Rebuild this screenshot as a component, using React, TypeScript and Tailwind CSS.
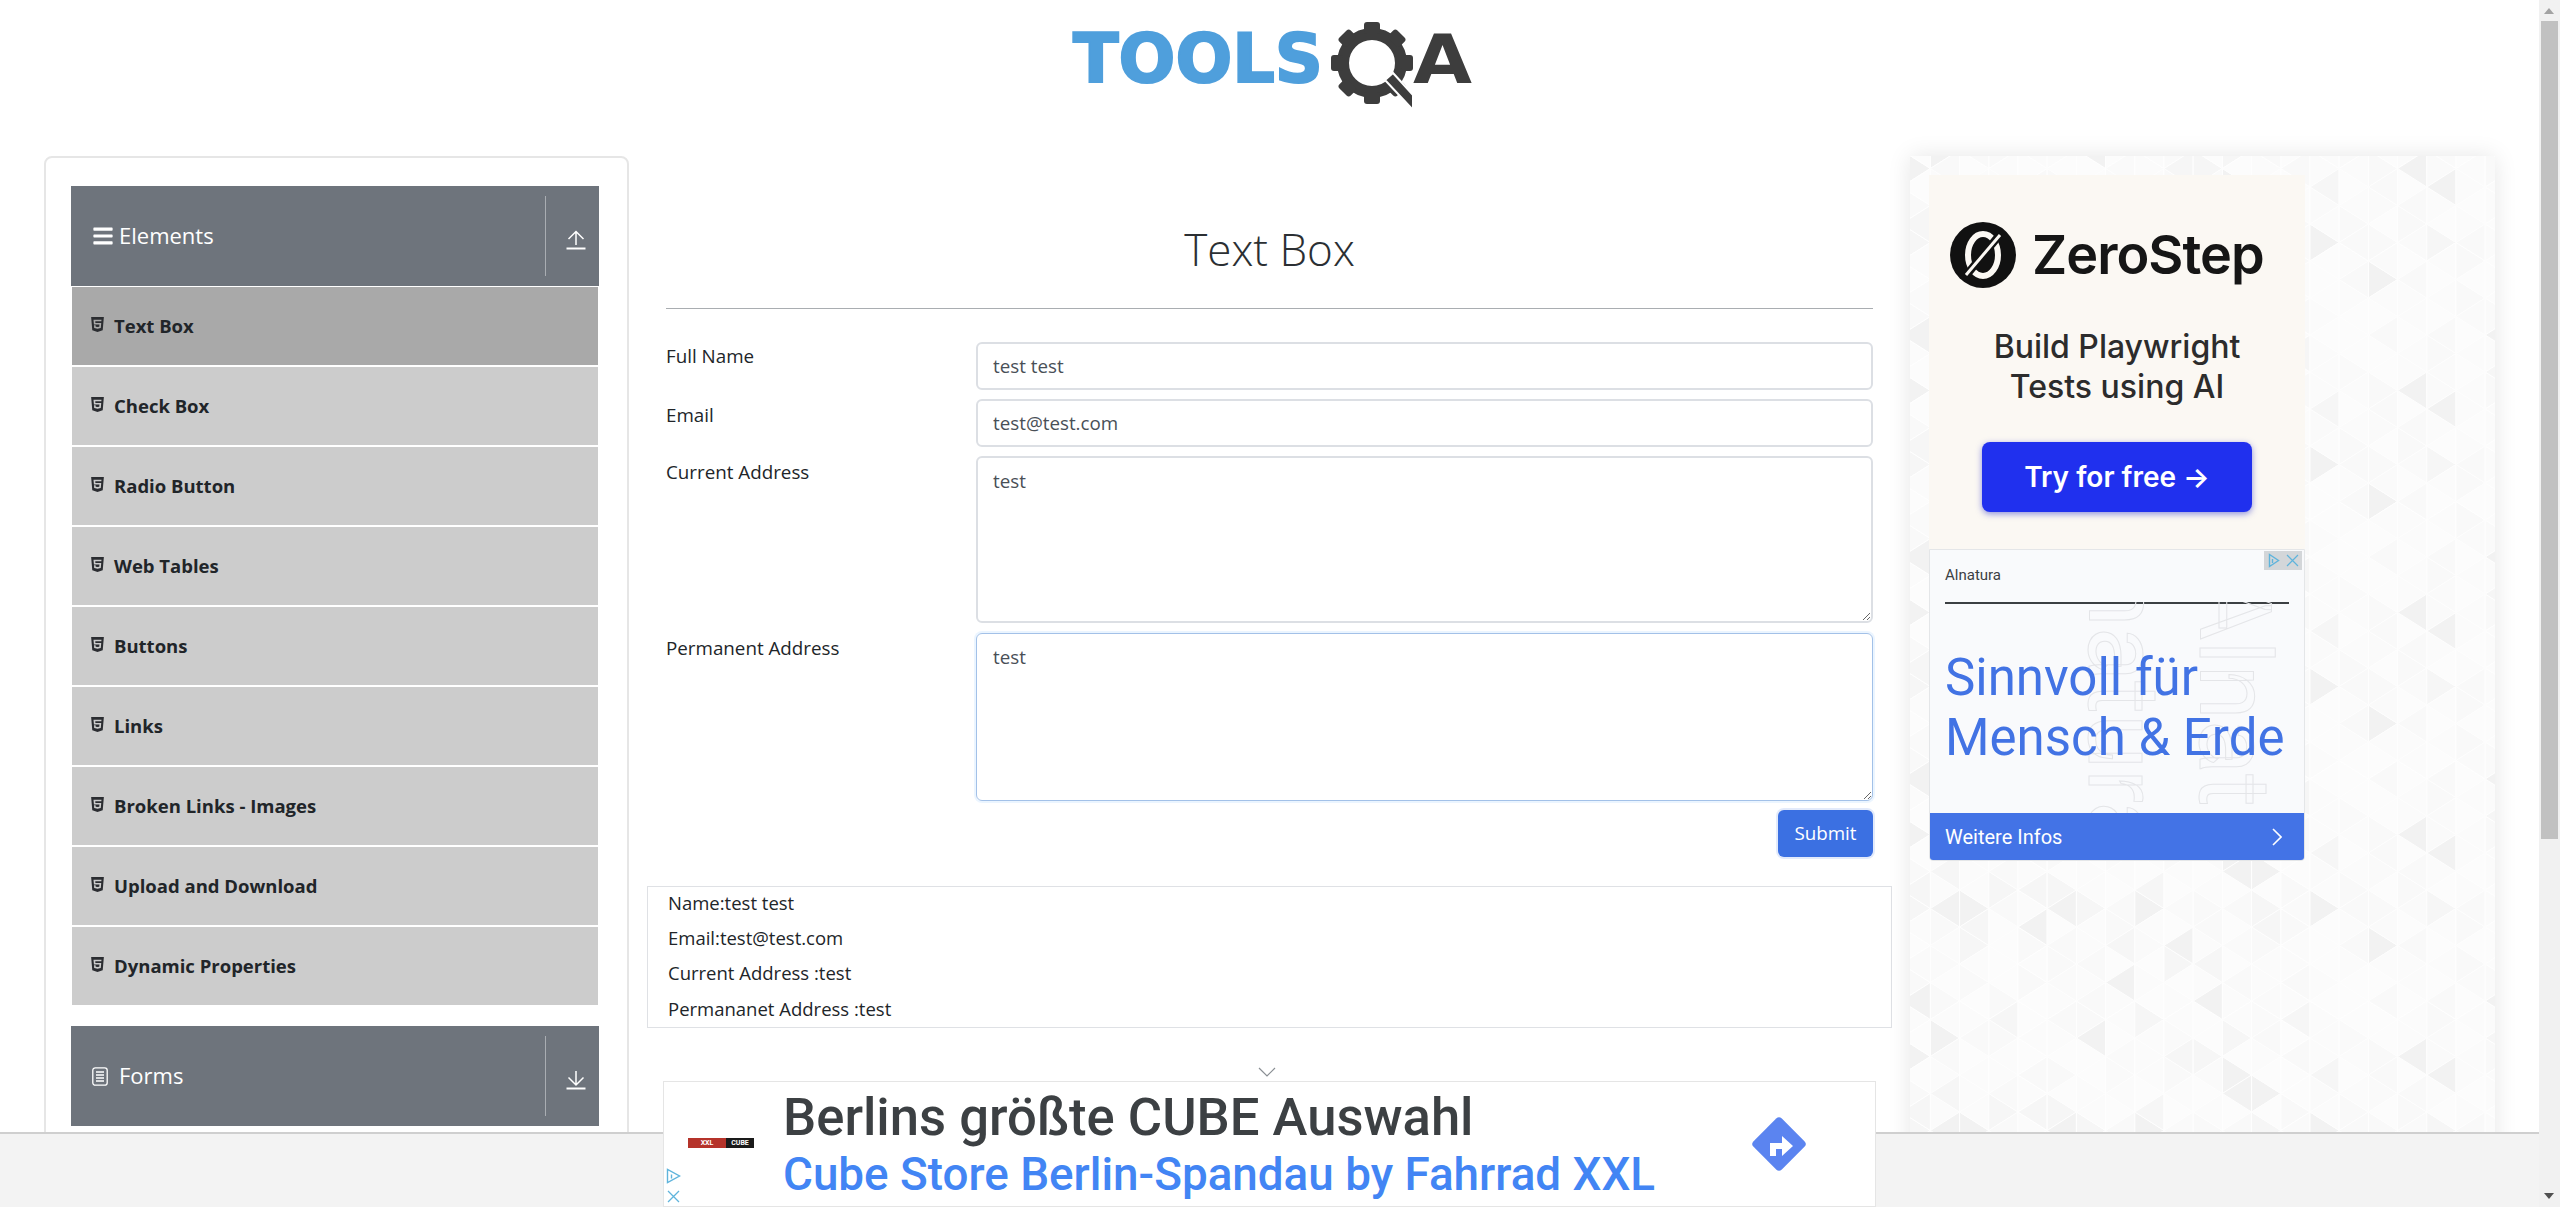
import React from "react";
import { FaBars, FaHtml5 } from "react-icons/fa";

const items = [
  "Text Box",
  "Check Box",
  "Radio Button",
  "Web Tables",
  "Buttons",
  "Links",
  "Broken Links - Images",
  "Upload and Download",
  "Dynamic Properties",
];

const Logo = () => (
  <svg width="400" height="156" viewBox="0 0 400 156">
    <text x="1" y="82" fontFamily="DejaVu Sans" fontWeight="700" fontSize="67" fill="#4f9fdc" stroke="#4f9fdc" strokeWidth="2" textLength="250" lengthAdjust="spacingAndGlyphs">
      TOOLS
    </text>
    <g transform="translate(300 63)" fill="#3d3d3d">
      <circle r="29" fill="none" stroke="#3d3d3d" strokeWidth="12" />
      {[0, 45, 90, 135, 180, 225, 270, 315].map((a) => (
        <rect key={a} x="-8" y="-41" width="16" height="12" rx="3" transform={`rotate(${a})`} />
      ))}
    </g>
    <polygon points="313,80 321,73 341,95 341,110" fill="#3d3d3d" stroke="#fff" strokeWidth="2" />
    <text x="341" y="83" fontFamily="DejaVu Sans" fontWeight="700" fontSize="68" fill="#3d3d3d" textLength="59" lengthAdjust="spacingAndGlyphs">
      A
    </text>
  </svg>
);

const ArrowIcon = ({ down }: { down?: boolean }) => (
  <svg width="20" height="20" viewBox="0 0 20 20" fill="none" stroke="#fff" strokeWidth="1.5">
    <path d="M0.5 18.5h19" strokeWidth="2" />
    {down ? <path d="M10 1v14M2.5 7.5l7.5 7.5 7.5-7.5" /> : <path d="M10 15V1.5M2.5 9l7.5-7.5L17.5 9" />}
  </svg>
);

const DocIcon = () => (
  <svg width="16" height="19" viewBox="0 0 16 19" fill="none" stroke="#fff" strokeWidth="1.3">
    <rect x="0.8" y="0.8" width="14.4" height="17.4" rx="2.5" />
    <path d="M4 5h8M4 8h8M4 11h8M4 14h8" />
  </svg>
);

const GroupHeader = ({ title, icon, down, className }: { title: string; icon: React.ReactNode; down?: boolean; className?: string }) => (
  <div className={`h-[100px] bg-[#6e747c] flex items-center text-white ${className ?? ""}`}>
    <div className="w-[48px] pl-[21px] flex justify-start shrink-0">{icon}</div>
    <div className="flex-1 text-[22px] leading-none -mt-[3px]">{title}</div>
    <div className="w-[54px] h-[80px] border-l border-[#a9adb2] flex items-center justify-center pl-[7px] pt-[8px]">
      <ArrowIcon down={down} />
    </div>
  </div>
);

const PatternBg = () => {
  const w = 29.2;
  const h = 37;
  const polys: React.ReactNode[] = [];
  const fills = ["#f2f2f2", "#fbfbfb", "#f9f9f9", "#fcfcfc", "#f6f6f6", "#fafafa", "#fcfcfc", "#fbfbfb", "#f9f9f9", "#fcfcfc", "#fbfbfb"];
  for (let c = 0; c < 22; c++) {
    const x = -8.8 + c * w;
    const off = c % 2 === 0 ? 0 : h / 2;
    for (let r = -1; r < 30; r++) {
      const rr = ((r % 6) + 6) % 6;
      const y = r * h + off - 6;
      const f1 = fills[(c * 7 + rr * 13 + (c % 5) * rr) % 11];
      const f2 = fills[(c * 5 + rr * 17 + 3 + (c % 3) * rr) % 11];
      polys.push(
        <polygon key={`a${c}-${r}`} points={`${x},${y} ${x},${y + h} ${x + w},${y + h / 2}`} fill={f1} stroke="#fefefe" strokeWidth="1" />,
        <polygon key={`b${c}-${r}`} points={`${x},${y} ${x + w},${y - h / 2} ${x + w},${y + h / 2}`} fill={f2} stroke="#fefefe" strokeWidth="1" />
      );
    }
  }
  return (
    <svg className="absolute inset-0 w-full h-full" aria-hidden="true">
      {polys}
    </svg>
  );
};

const ZeroStepAd = () => (
  <div className="h-[374px] bg-[#fbf8f3] flex flex-col items-center font-['Inter',sans-serif] text-[#222]">
    <div className="flex items-center h-[66px] mt-[47px] w-full pl-[21px]">
      <svg width="66" height="66" viewBox="0 0 66 66" className="shrink-0">
        <circle cx="33" cy="33" r="33" fill="#111" />
        <ellipse cx="33" cy="33" rx="15" ry="21" fill="none" stroke="#fbf8f3" strokeWidth="6" />
        <path d="M14 56L52 10" stroke="#111" strokeWidth="8" />
        <path d="M16 53L50 13" stroke="#fbf8f3" strokeWidth="3" />
      </svg>
      <div className="ml-[16px] text-[54px] leading-none font-semibold tracking-[-1px] text-[#161616]">ZeroStep</div>
    </div>
    <div className="mt-[39px] text-[32px] leading-[40px] font-medium text-center text-[#2c2c2c]">
      Build Playwright
      <br />
      Tests using AI
    </div>
    <div className="mt-[35px] w-[270px] h-[70px] rounded-[8px] bg-[#2030ee] shadow-[0_2px_6px_rgba(30,40,200,0.5)] flex items-center justify-center text-white text-[28px] font-semibold">
      Try for free →
    </div>
  </div>
);

const AdChoices = () => (
  <div className="absolute top-[1px] right-[2px] flex">
    <div className="w-[19px] h-[19px] bg-[#d3d6d9] flex items-center justify-center">
      <svg width="12" height="15" viewBox="0 0 12 15" fill="none" stroke="#5fb4dc" strokeWidth="1.4">
        <path d="M1.5 1.5v12l9-6z" />
        <path d="M4.5 6v4" />
      </svg>
    </div>
    <div className="w-[19px] h-[19px] bg-[#d3d6d9] flex items-center justify-center">
      <svg width="13" height="13" viewBox="0 0 13 13" fill="none" stroke="#5fb4dc" strokeWidth="1.2">
        <path d="M1 1l11 11M12 1L1 12" />
      </svg>
    </div>
  </div>
);

const AlnaturaAd = () => (
  <div className="relative h-[312px] bg-[#f9fafc] border border-[#e4e6e8] rounded-b-[4px] font-['Roboto',sans-serif] overflow-hidden flex flex-col">
    <div className="absolute left-0 top-[52px] h-[211px] w-full overflow-hidden" aria-hidden="true">
      <div className="absolute left-[243px] top-[-120px] rotate-90 origin-top-left whitespace-nowrap text-[100px] leading-none text-transparent [-webkit-text-stroke:1px_#e4e5e8]">
        Alnatura
      </div>
      <div className="absolute left-[354px] top-[-27px] rotate-90 origin-top-left whitespace-nowrap text-[100px] leading-none text-transparent [-webkit-text-stroke:1px_#e4e5e8]">
        Alnatura
      </div>
    </div>
    <AdChoices />
    <div className="pl-[15px] pt-[15px] text-[15px] leading-[20px] text-[#3c4043]">Alnatura</div>
    <div className="mx-[15px] mt-[17px] h-[2px] bg-[#3c4043]" />
    <div className="relative pl-[15px] mt-[44px] text-[51px] leading-[60px] text-[#4273e4] flex-1">
      Sinnvoll für
      <br />
      Mensch &amp; Erde
    </div>
    <div className="relative h-[47px] bg-[#4373e6] flex items-center justify-between pl-[15px] pr-[22px] text-white text-[20px]">
      Weitere Infos
      <svg width="10" height="18" viewBox="0 0 10 18" fill="none" stroke="#fff" strokeWidth="1.6">
        <path d="M1 1l8 8-8 8" />
      </svg>
    </div>
  </div>
);

const App = () => {
  return (
    <div className="flex h-[1207px] overflow-hidden bg-white font-['Open_Sans',sans-serif] text-[#212529]">
      <div className="relative flex-1 min-w-0 overflow-hidden">
        <div className="h-[156px] flex justify-center pl-[5px]">
          <Logo />
        </div>

        <div className="flex pl-[44px]">
          {/* left menu */}
          <div className="w-[585px] h-[1100px] shrink-0 border-2 border-[#e6e6e6] rounded-[8px] pt-[28px] pl-[25px]">
            <div className="w-[528px]">
              <GroupHeader title="Elements" icon={<FaBars size={22} />} />
              {items.map((item, i) => (
                <div
                  key={item}
                  className={`h-[80px] flex items-center pl-[18px] gap-[8px] border border-white font-bold text-[18.5px] ${i === 0 ? "bg-[#a9a9a9] border-[#d5dbe3]" : "bg-[#cccccc]"}`}
                >
                  <FaHtml5 size={17} className="text-[#2b2d31] -mt-[3px] -ml-[1px]" />
                  <span>{item}</span>
                </div>
              ))}
              <GroupHeader title="Forms" icon={<DocIcon />} down className="mt-[20px]" />
            </div>
          </div>

          {/* center column */}
          <div className="w-[1245px] ml-[18px] shrink-0">
            <div className="px-[19px]">
              <h1 className="h-[153px] border-b border-[#a9adb1] text-center text-[44px] font-light leading-none pt-[71px] text-[#2b2f33]">Text Box</h1>
              <div className="mt-[33px] flex flex-col text-[18.8px]">
                <div className="flex h-[48px]">
                  <label className="w-[310px]">Full Name</label>
                  <input defaultValue="test test" className="flex-1 h-[48px] px-[15px] border-2 border-[#dcdfe4] rounded-[6px] text-[#495057] outline-none" />
                </div>
                <div className="flex h-[48px] mt-[9px]">
                  <label className="w-[310px] pt-[2px]">Email</label>
                  <input defaultValue="test@test.com" className="flex-1 h-[48px] px-[15px] border-2 border-[#dcdfe4] rounded-[6px] text-[#495057] outline-none" />
                </div>
                <div className="flex h-[167px] mt-[9px]">
                  <label className="w-[310px] pt-[2px]">Current Address</label>
                  <textarea defaultValue="test" className="flex-1 h-[167px] px-[15px] pt-[9px] border-2 border-[#dcdfe4] rounded-[6px] text-[#495057] outline-none resize" />
                </div>
                <div className="flex h-[168px] mt-[10px]">
                  <label className="w-[310px] pt-[1px]">Permanent Address</label>
                  <textarea defaultValue="test" className="flex-1 h-[168px] px-[16px] pt-[9px] border border-[#a3c1e8] rounded-[6px] text-[#495057] outline-none resize shadow-[0_0_0_2px_rgba(0,123,255,0.08)]" />
                </div>
                <div className="flex justify-end mt-[9px]">
                  <button className="w-[95px] h-[47px] rounded-[6px] bg-[#3b70e2] text-white shadow-[0_0_0_2px_rgba(59,112,226,0.15)]">Submit</button>
                </div>
              </div>
            </div>
            <div className="mt-[29px] h-[142px] border border-[#dfe1e5] pl-[20px] text-[18.5px] leading-[35.2px]">
              <div className="-mt-[2px]">
                <p>Name:test test</p>
                <p>Email:test@test.com</p>
                <p>Current Address :test</p>
                <p>Permananet Address :test</p>
              </div>
            </div>
          </div>

          {/* right ads */}
          <div className="relative w-[585px] h-[1100px] ml-[18px] shrink-0 bg-[#fafafa] shadow-[0_0_22px_rgba(0,0,0,0.1)] pt-[19px] pl-[19px]">
            <PatternBg />
            <div className="relative w-[376px]">
              <ZeroStepAd />
              <AlnaturaAd />
            </div>
          </div>
        </div>

        {/* fixed bottom bar */}
        <div className="absolute bottom-0 left-0 right-0 h-[75px] bg-[#f3f3f3] border-t-2 border-[#cfcfcf]" />

        {/* fixed bottom ad */}
        <div className="absolute left-[663px] bottom-0 w-[1213px] h-[126px] bg-white border border-[#e5e5e5] font-['Roboto',sans-serif]">
          <svg className="absolute left-[594px] -top-[15px]" width="18" height="10" viewBox="0 0 18 10" fill="none" stroke="#8a8f94" strokeWidth="1.2">
            <path d="M1 1l8 8 8-8" />
          </svg>
          <div className="absolute left-[24px] top-[56px] w-[66px]">
            <div className="flex h-[10px] text-[7px] leading-[10px] font-bold text-white">
              <div className="w-[38px] bg-[#b5332a] text-center whitespace-nowrap overflow-hidden">XXL</div>
              <div className="w-[28px] bg-[#1a1a1a] text-center">CUBE</div>
            </div>
          </div>
          <svg className="absolute left-[2px] bottom-[22px]" width="15" height="16" viewBox="0 0 15 16" fill="none" stroke="#5fb4dc" strokeWidth="1.4">
            <path d="M1.5 1.5v13l12-6.5z" />
            <path d="M5.5 6.5v4" />
          </svg>
          <svg className="absolute left-[3px] bottom-[3px]" width="13" height="13" viewBox="0 0 13 13" fill="none" stroke="#5fb4dc" strokeWidth="1.3">
            <path d="M1 1l11 11M12 1L1 12" />
          </svg>
          <div className="pl-[119px] pt-[4px] text-[52.6px] leading-[62px] font-medium text-[#3c4043] whitespace-nowrap">Berlins größte CUBE Auswahl</div>
          <div className="pl-[119px] text-[45.8px] leading-[54px] font-medium text-[#4285f4] whitespace-nowrap">Cube Store Berlin-Spandau by Fahrrad XXL</div>
          <svg className="absolute left-[1086px] top-[33px]" width="58" height="58" viewBox="0 0 58 58">
            <rect x="9" y="9" width="40" height="40" rx="4" transform="rotate(45 29 29)" fill="#5b84f0" />
            <path d="M20 41V28h12v-7l11 10-11 10v-7h-6v7z" fill="#fff" />
          </svg>
        </div>
      </div>

      {/* scrollbar */}
      <div className="relative w-[21px] shrink-0 bg-[#f1f1f1] pt-[21px] flex justify-center">
        <div className="absolute top-[8px] left-[5px] w-0 h-0 border-x-[5.5px] border-x-transparent border-b-[6px] border-b-[#a3a3a3]" />
        <div className="w-[17px] h-[818px] bg-[#c1c1c1]" />
        <div className="absolute bottom-[8px] left-[5px] w-0 h-0 border-x-[5.5px] border-x-transparent border-t-[6px] border-t-[#505050]" />
      </div>
    </div>
  );
};

export default App;
